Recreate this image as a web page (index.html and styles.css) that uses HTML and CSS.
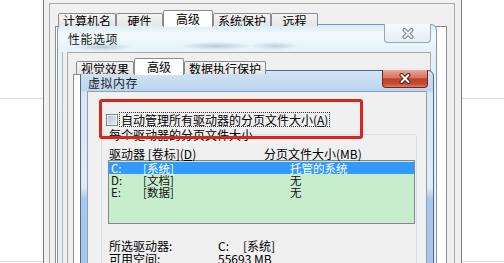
FILE: index.html
```html
<!DOCTYPE html>
<html lang="zh-CN">
<head>
    <meta charset="UTF-8">
    <title>虚拟内存</title>
    <link rel="stylesheet" href="styles.css">
</head>
<body>
<div class="desk">
    <div class="page-rule rule-top"></div>
    <div class="page-rule rule-bottom"></div>

    <!-- 系统属性 -->
    <div class="win win-sys">
        <div class="sys-group">
            <div class="tabs">
                <span class="tab">计算机名</span>
                <span class="tab">硬件</span>
                <span class="tab on">高级</span>
                <span class="tab">系统保护</span>
                <span class="tab">远程</span>
            </div>
            <div class="tab-page"></div>
        </div>
    </div>

    <!-- 性能选项 -->
    <div class="win win-perf">
        <div class="titlebar">
            <span class="title">性能选项</span>
            <span class="close close-idle">
                <svg width="14" height="11" viewBox="0 0 14 11"><path d="M3.5 2 L10.5 9 M10.5 2 L3.5 9" stroke="#7d8791" stroke-width="4" stroke-linecap="round"/><path d="M3.5 2 L10.5 9 M10.5 2 L3.5 9" stroke="#eef2f5" stroke-width="2" stroke-linecap="round"/></svg>
            </span>
        </div>
        <div class="perf-body">
            <div class="perf-group">
                <div class="tabs">
                    <span class="tab">视觉效果</span>
                    <span class="tab on">高级</span>
                    <span class="tab">数据执行保护</span>
                </div>
                <div class="tab-page"></div>
            </div>
        </div>
    </div>

    <!-- 虚拟内存 -->
    <div class="win win-vm">
        <div class="titlebar">
            <span class="title">虚拟内存</span>
            <span class="close close-red">
                <svg width="14" height="11" viewBox="0 0 14 11"><path d="M3.5 2 L10.5 9 M10.5 2 L3.5 9" stroke="#5a1e12" stroke-width="4" stroke-linecap="round"/><path d="M3.5 2 L10.5 9 M10.5 2 L3.5 9" stroke="#fff" stroke-width="2" stroke-linecap="round"/></svg>
            </span>
        </div>
        <div class="vm-body">
            <label class="auto-row">
                <span class="check"></span>
                <span class="focus">自动管理所有驱动器的分页文件大小(<u>A</u>)</span>
            </label>

            <fieldset class="drives">
                <legend>每个驱动器的分页文件大小</legend>
                <div class="list-head">
                    <span>驱动器 [卷标](<u>D</u>)</span>
                    <span>分页文件大小(MB)</span>
                </div>
                <ul class="drive-list">
                    <li class="sel"><span>C:</span><span>[系统]</span><span>托管的系统</span></li>
                    <li><span>D:</span><span>[文档]</span><span>无</span></li>
                    <li><span>E:</span><span>[数据]</span><span>无</span></li>
                </ul>
                <dl class="info">
                    <dt>所选驱动器:</dt>
                    <dd><span class="drv">C:</span>[系统]</dd>
                    <dt>可用空间:</dt>
                    <dd>55693 MB</dd>
                </dl>
            </fieldset>

            <!-- 红框标注 -->
            <div class="mark"></div>
        </div>
    </div>
</div>
</body>
</html>
```

FILE: styles.css
```css
* {
    box-sizing: border-box;
}

body {
    margin: 0;
    background: #fff;
    font: 12px/13px "Noto Sans CJK SC", sans-serif;
    color: #000;
}

.desk {
    position: relative;
    width: 504px;
    height: 263px;
    overflow: hidden;
}

/* lines of the web page behind */
.page-rule {
    position: absolute;
    left: 0;
    right: 0;
    border-top: 1px solid #d9d9d9;
}
.rule-top { top: 98px; }
.rule-bottom { top: 261px; }

.win {
    position: absolute;
}

/* tabs shared by both dialogs */
.tabs {
    display: flex;
    align-items: flex-end;
    height: 16px;
    padding-left: 3px;
    position: relative;
    z-index: 1;
}

.tab {
    min-width: 47px;
    height: 13px;
    padding: 0 4px;
    border: 1px solid #898c95;
    border-bottom: 0;
    border-radius: 2px 2px 0 0;
    background: linear-gradient(#f4f4f4, #e6e6e6);
    line-height: 14px;
    text-align: center;
    white-space: nowrap;
    overflow: hidden;
}

.tab.on {
    height: 17px;
    padding: 0 12px;
    margin-bottom: -1px;
    background: #fff;
    line-height: 15px;
}

.tab-page {
    height: 300px;
    border: 1px solid #898c95;
    background: #fff;
}

/* 系统属性 */
.win-sys {
    left: 43px;
    top: -20px;
    width: 419px;
    height: 300px;
    padding: 23px 6px 0 5px;
    background: #f0f0f0;
    border-left: 1px solid #7c7c7c;
    border-right: 1px solid #7c7c7c;
}

.sys-group {
    height: 100%;
    padding: 6px 7px 0 5px;
    border: 1px solid #a9a9a9;
    border-bottom: 0;
}

/* title bars */
.titlebar {
    position: relative;
    line-height: 16px;
    letter-spacing: 0.5px;
    color: #1a1a1a;
}

.close {
    position: absolute;
    top: -1px;
    display: flex;
    align-items: center;
    justify-content: center;
    border-radius: 0 0 4px 4px;
}

.close-idle {
    right: -1px;
    width: 47px;
    height: 19px;
    border: 1px solid #9aa6b2;
    border-top: 0;
    background: linear-gradient(#f7fbfd, #e4eef4);
}

.close-red {
    right: -1px;
    width: 46px;
    height: 18px;
    border: 1px solid #6e2a1c;
    border-top: 0;
    background: linear-gradient(#eaa898 0, #d8735e 45%, #c1432a 52%, #c44a2e 80%, #da7d60 100%);
}

/* 性能选项 */
.win-perf {
    left: 57px;
    top: 24px;
    width: 380px;
    height: 260px;
    border: 1px solid #8696a6;
    border-radius: 6px 6px 0 0;
    background: linear-gradient(#d8edf7 0, #f2f9fc 9px, #e5f2f8 27px, #e4eef4 100%);
}

.win-perf .titlebar {
    height: 27px;
    padding: 6px 0 0 10px;
    background:
        radial-gradient(30px 4px at 45px 22px, rgba(105, 120, 135, 0.35), transparent),
        radial-gradient(36px 4px at 158px 21px, rgba(105, 120, 135, 0.35), transparent),
        radial-gradient(24px 4px at 217px 21px, rgba(105, 120, 135, 0.3), transparent);
}

.win-perf .close {
    right: 5px;
}

.perf-body {
    height: 230px;
    margin: 0 5px 0 4px;
    padding-left: 4px;
    background: #f0f0f0;
    border-left: 1px solid #a8b4c0;
}

.perf-group {
    height: 100%;
    padding: 5px 0 0 5px;
    border: 1px solid #a9a9a9;
    border-bottom: 0;
}

/* 虚拟内存 */
.win-vm {
    left: 80px;
    top: 70px;
    width: 354px;
    height: 220px;
    padding: 0 6px;
    border: 1px solid #4b6a8c;
    border-radius: 6px 6px 0 0;
    background: linear-gradient(#d2e4f6 0, #bcd5ef 20px, #d9e7f5 21px, #e0ebf6 116px, #a9c7e7 128px, #a7c5e6 100%);
}

.win-vm .titlebar {
    height: 20px;
    padding: 4px 0 0 1px;
}

.win-vm .close {
    right: -1px;
}

.vm-body {
    position: relative;
    height: 200px;
    padding: 20px 9px 0 13px;
    background: #f0f0f0;
    border: 1px solid #8ba1b9;
    border-bottom: 0;
}

.auto-row {
    display: flex;
    align-items: center;
    height: 15px;
    padding-left: 5px;
}

.check {
    width: 12px;
    height: 12px;
    margin-right: 2px;
    border: 1px solid #7f8487;
    background: linear-gradient(135deg, #b3c4d6, #e3ecf4);
    box-shadow: inset 0 0 0 1px #f4f4f4;
}

.focus {
    padding: 0 1px;
    outline: 1px dotted #333;
}

.drives {
    margin: 1px 0 0;
    padding: 0 1px 20px 6px;
    border: 1px solid #d5dfe5;
    border-radius: 3px;
    min-width: 0;
}

.drives legend {
    padding: 0 1px;
    line-height: 13px;
}

.list-head {
    display: grid;
    grid-template-columns: 155px 1fr;
    height: 13px;
    margin-top: 6px;
    padding-left: 1px;
}

.drive-list {
    list-style: none;
    height: 64px;
    margin: 0;
    padding: 1px 0 0;
    border: 1px solid #828790;
    background: #c7edcc;
}

.drive-list li {
    display: grid;
    grid-template-columns: 32px 147px 1fr;
    height: 12px;
    padding-left: 2px;
    font-size: 11.5px;
    line-height: 12px;
    color: #111;
}

.drive-list li.sel {
    background: #3399ff;
    color: #fff;
}

.info {
    display: grid;
    grid-template-columns: 109px 1fr;
    margin: 15px 0 0 1px;
}

.info dt,
.info dd {
    margin: 0;
}

.drv {
    display: inline-block;
    width: 25px;
}

/* 红框 */
.mark {
    position: absolute;
    left: 11px;
    top: 7px;
    width: 264px;
    height: 40px;
    border: 3px solid #d8261c;
    border-radius: 3px;
}
```
